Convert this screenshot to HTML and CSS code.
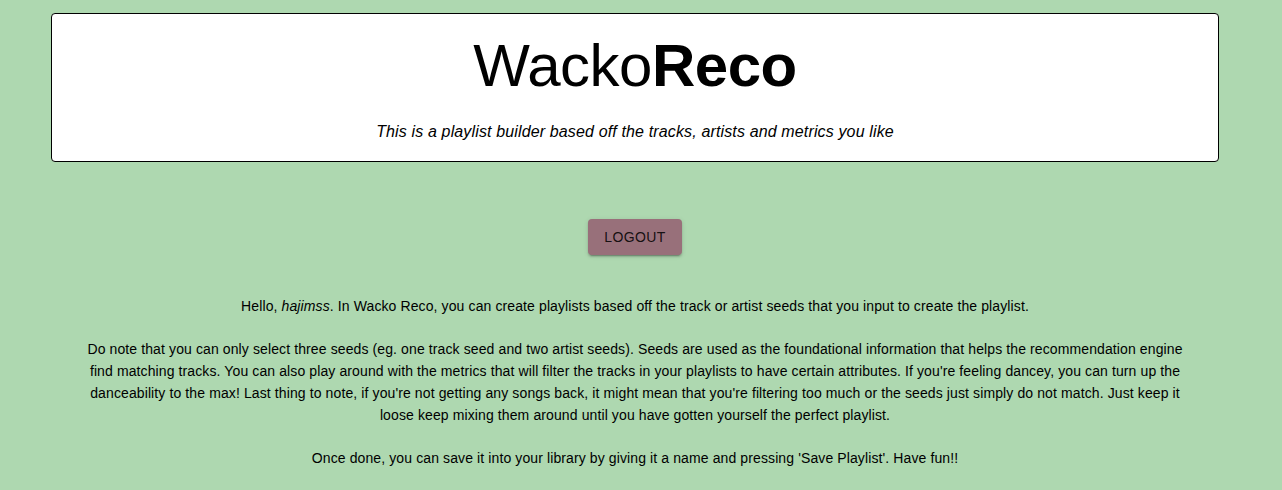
FILE: index.html
```html
<!DOCTYPE html>
<html lang="en">
<head>
<meta charset="utf-8">
<title>WackoReco</title>
<link rel="stylesheet" href="styles.css">
</head>
<body>
<div class="page">
  <header class="header">
    <h1 class="title">Wacko<b>Reco</b></h1>
    <p class="subtitle">This is a playlist builder based off the tracks, artists and metrics you like</p>
  </header>
  <div class="actions">
    <button class="logout">Logout</button>
  </div>
  <section class="intro">
    <p>Hello, <i>hajimss</i>. In Wacko Reco, you can create playlists based off the track or artist seeds that you input to create the playlist.</p>
    <p>Do note that you can only select three seeds (eg. one track seed and two artist seeds). Seeds are used as the foundational information that helps the recommendation engine find matching tracks. You can also play around with the metrics that will filter the tracks in your playlists to have certain attributes. If you're feeling dancey, you can turn up the danceability to the max! Last thing to note, if you're not getting any songs back, it might mean that you're filtering too much or the seeds just simply do not match. Just keep it loose keep mixing them around until you have gotten yourself the perfect playlist.</p>
    <p>Once done, you can save it into your library by giving it a name and pressing 'Save Playlist'. Have fun!!</p>
  </section>
</div>
</body>
</html>
```

FILE: styles.css
```css
html, body {
  margin: 0;
  padding: 0;
  background: #aed8b0;
}
body {
  font-family: "Liberation Sans", Arial, Helvetica, sans-serif;
  color: #000;
}
.page {
  width: 1270px;
  padding-top: 13px;
}
.header {
  margin: 0 51px;
  background: #fff;
  border: 1px solid #000;
  border-radius: 4px;
  height: 147px;
  box-sizing: content-box;
  text-align: center;
}
.title {
  margin: 17px 0 0;
  font-size: 60px;
  line-height: 69px;
  font-weight: 400;
  letter-spacing: -0.5px;
}
.title b {
  font-weight: 700;
}
.subtitle {
  margin: 22px 0 0;
  font-size: 16px;
  line-height: 19px;
  font-style: italic;
  letter-spacing: 0.14px;
}
.actions {
  display: flex;
  justify-content: center;
  margin-top: 57px;
}
.logout {
  font-family: "Liberation Sans", Arial, Helvetica, sans-serif;
  font-size: 14px;
  font-weight: 400;
  letter-spacing: 0.4px;
  line-height: 24px;
  text-transform: uppercase;
  color: rgba(0, 0, 0, 0.87);
  background: #98707a;
  border: none;
  border-radius: 4px;
  padding: 6px 16px;
  width: 94px;
  height: 36px;
  box-shadow: 0 3px 1px -2px rgba(0,0,0,0.2), 0 2px 2px 0 rgba(0,0,0,0.14), 0 1px 5px 0 rgba(0,0,0,0.12);
}
.intro {
  width: 1110px;
  margin: 40px auto 0;
  text-align: center;
  font-size: 14px;
  line-height: 22px;
  letter-spacing: 0.11px;
}
.intro p {
  margin: 0 0 21px;
}
```
